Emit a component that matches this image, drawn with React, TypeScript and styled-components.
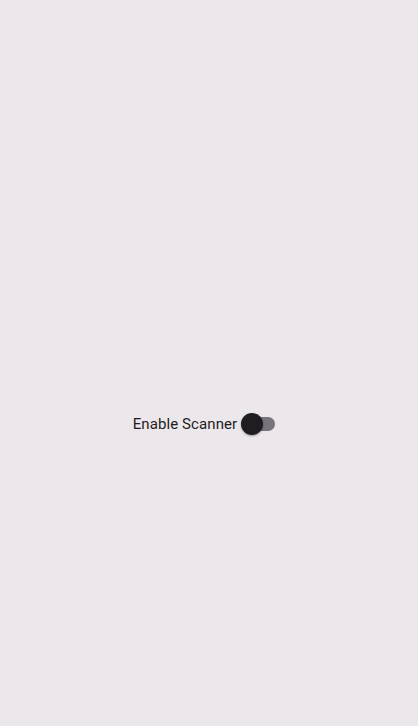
import React from "react";
import styled, { createGlobalStyle } from "styled-components";

const Global = createGlobalStyle`
  html, body { margin: 0; padding: 0; background: #ece7eb; }
  body { font-family: Roboto, "Noto Sans", sans-serif; }
`;

const Page = styled.div`
  width: 418px;
  height: 726px;
  display: flex;
  align-items: center;
  justify-content: center;
  padding-top: 122px;
  box-sizing: border-box;
`;

const Row = styled.label`
  display: flex;
  align-items: center;
  gap: 4px;
  padding-right: 10px;
`;

const Label = styled.span`
  font-size: 15px;
  color: #1f1d22;
  letter-spacing: 0.1px;
`;

const Switch = styled.span`
  position: relative;
  width: 34px;
  height: 22px;
  display: inline-block;
`;

const Track = styled.span`
  position: absolute;
  left: 2px;
  right: 0;
  top: 4px;
  height: 14px;
  border-radius: 7px;
  background: #78737c;
`;

const Thumb = styled.span<{ $on: boolean }>`
  position: absolute;
  top: 0;
  left: ${(p) => (p.$on ? "12px" : "0")};
  width: 22px;
  height: 22px;
  border-radius: 50%;
  background: #1f1d22;
  box-shadow: 0 1px 2px rgba(0, 0, 0, 0.35);
`;

export default function App() {
  const [on, setOn] = React.useState(false);
  return (
    <>
      <Global />
      <Page>
        <Row onClick={() => setOn(!on)}>
          <Label>Enable Scanner</Label>
          <Switch>
            <Track />
            <Thumb $on={on} />
          </Switch>
        </Row>
      </Page>
    </>
  );
}
